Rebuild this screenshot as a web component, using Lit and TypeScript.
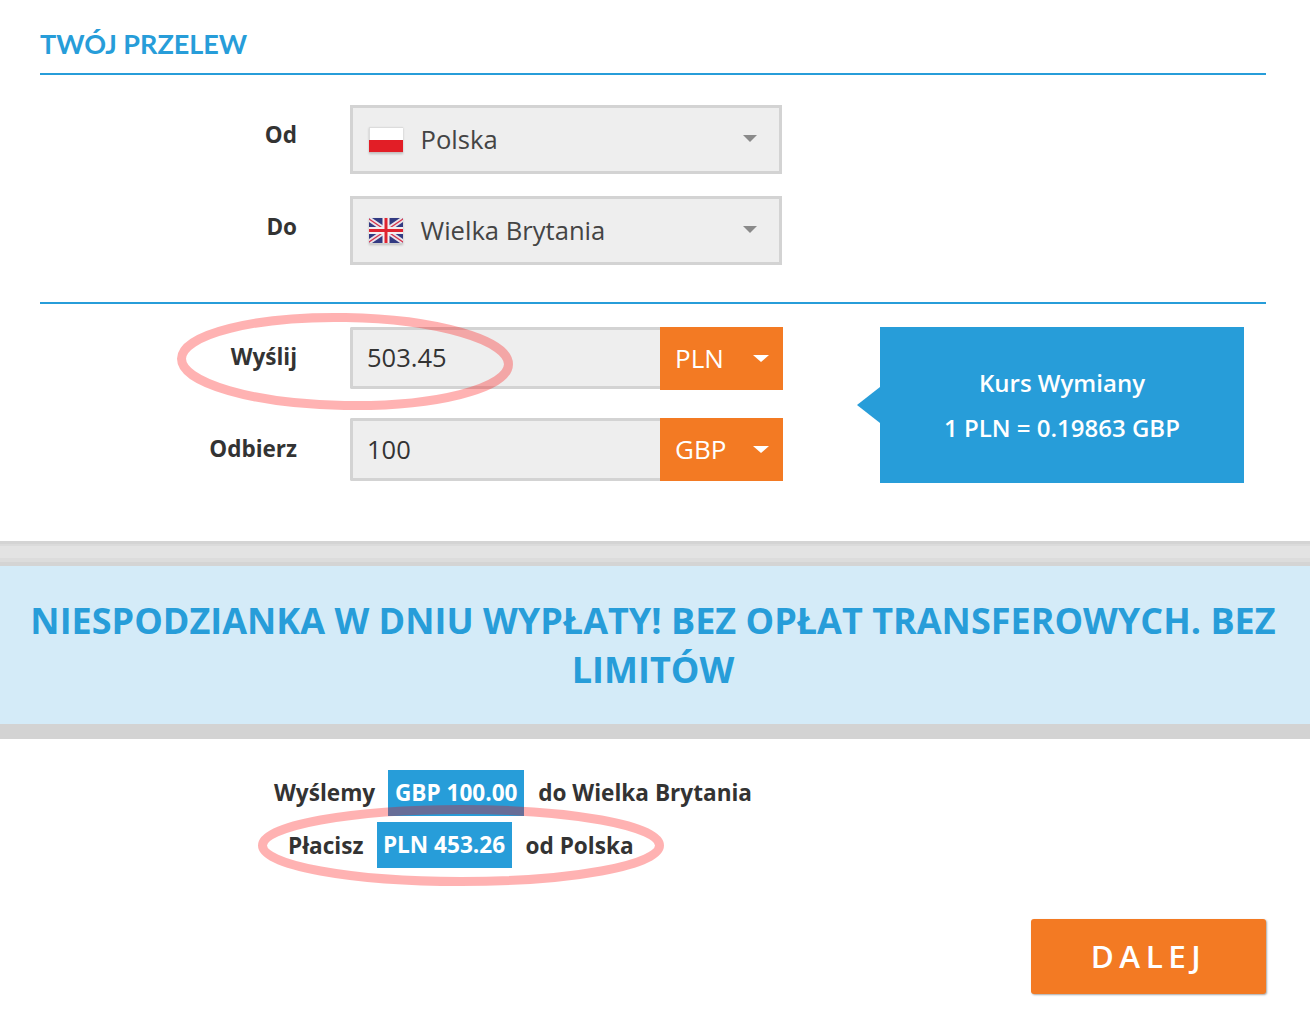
import { LitElement, html, css, svg } from "lit";
import { customElement } from "lit/decorators.js";

const plFlag = html`<svg class="flag" viewBox="0 0 34 26" width="34" height="26">
  <rect x="0" y="0" width="34" height="25" fill="#dcdcdc"/>
  <rect x="1" y="1" width="33" height="12" fill="#fff"/>
  <rect x="0" y="13" width="34" height="12" fill="#e21e26"/>
  <rect x="0" y="25" width="34" height="1" fill="#c9c0c0"/>
</svg>`;

const ukFlag = html`<svg class="flag" viewBox="0 0 34 26" width="34" height="26">
  <rect width="34" height="25" fill="#323a82"/>
  <path d="M0 1 L34 24 M34 1 L0 24" stroke="#e8e3ea" stroke-width="5"/>
  <path d="M0 1 L34 24 M34 1 L0 24" stroke="#d8324a" stroke-width="1.4"/>
  <path d="M17 0 V25 M0 12.5 H34" stroke="#f4eef0" stroke-width="7"/>
  <path d="M17 0 V25 M0 12.5 H34" stroke="#df2430" stroke-width="3"/>
  <rect y="25" width="34" height="1" fill="#cfcfcf"/>
</svg>`;

const rings = svg`
  <ellipse cx="345" cy="361.5" rx="163.5" ry="44" transform="rotate(1 345 361.5)" />
  <ellipse cx="461" cy="845.5" rx="198.5" ry="36" />
`;

@customElement("app-root")
export class AppRoot extends LitElement {
  static styles = css`
    :host {
      display: block;
      position: relative;
      width: 100%;
      min-height: 1027px;
      background: #fff;
      font-family: "Open Sans", "Noto Sans", sans-serif;
      color: #333;
      overflow: hidden;
    }
    .top {
      padding: 0 44px 58px 40px;
    }
    .title {
      margin: 0;
      height: 48px;
      padding-top: 25px;
      font-family: Lato, "Open Sans", sans-serif;
      font-size: 27px;
      line-height: 38px;
      font-weight: 700;
      letter-spacing: 0;
      color: #279dd9;
      border-bottom: 2px solid #279dd9;
    }
    .countries {
      display: grid;
      grid-template-columns: 257px 432px;
      column-gap: 53px;
      row-gap: 22px;
      padding: 30px 0 37px;
      border-bottom: 2px solid #279dd9;
    }
    .label {
      font-size: 22.5px;
      font-weight: 700;
      text-align: right;
      color: #333;
      line-height: 30px;
    }
    .countries .label { padding-top: 15px; }
    .countries .label.do { padding-top: 16px; }
    .select {
      height: 69px;
      box-sizing: border-box;
      border: 3px solid #d3d3d3;
      background: #eee;
      display: flex;
      align-items: center;
      padding: 0 22px 0 16px;
      font-size: 25.6px;
      color: #444;
    }
    .select .name { margin-left: 17.5px; flex: 1; }
    .flag {
      display: block;
      flex: none;
      margin-top: 1px;
      filter: blur(0.4px) drop-shadow(0 1px 1px rgba(0, 0, 0, 0.2));
    }
    .caret {
      width: 0;
      height: 0;
      border-left: 7px solid transparent;
      border-right: 7px solid transparent;
      border-top: 7px solid #8a8a8a;
      margin-top: -3px;
    }
    .exchange {
      display: flex;
      padding-top: 23px;
    }
    .fields {
      display: grid;
      grid-template-columns: 257px 433px;
      column-gap: 53px;
      row-gap: 28px;
      align-content: start;
    }
    .fields .label { line-height: 60px; }
    .fields .label.second { line-height: 62px; }
    .group { display: flex; height: 63px; }
    .input {
      flex: 1;
      height: 63px;
      box-sizing: border-box;
      border: 3px solid #d3d3d3;
      border-right: 0;
      border-radius: 2px 0 0 2px;
      background: #eee;
      padding: 0 0 2px 14px;
      display: flex;
      align-items: center;
      font-size: 25.5px;
      color: #333;
    }
    .input.short { height: 62px; padding-bottom: 3px; }
    .currency {
      width: 123px;
      box-sizing: border-box;
      background: #f37a23;
      color: #fff;
      font-size: 26px;
      display: flex;
      align-items: center;
      justify-content: space-between;
      padding: 0 14px 2px 15px;
    }
    .currency .caret { border-top-color: #fff; border-left-width: 8px; border-right-width: 8px; margin-top: 2px; }
    .rate {
      position: relative;
      margin-left: 97px;
      width: 364px;
      height: 156px;
      box-sizing: border-box;
      background: #279dd9;
      color: #fff;
      font-size: 24px;
      font-weight: 600;
      line-height: 45px;
      text-align: center;
      display: flex;
      flex-direction: column;
      justify-content: center;
    }
    .rate::before {
      content: "";
      position: absolute;
      left: -23px;
      top: 60px;
      border-top: 18px solid transparent;
      border-bottom: 18px solid transparent;
      border-right: 23px solid #279dd9;
    }
    .band {
      height: 25px;
      background: linear-gradient(
        #d4d4d4 0 3px,
        #dbdbdb 3px 5px,
        #e3e3e3 5px 17px,
        #dcdcdc 17px 21px,
        #d4d4d4 21px 25px
      );
    }
    .promo {
      margin: 0;
      box-sizing: border-box;
      height: 173px;
      padding: 30px 22px 0 18px;
      background: #d4ebf8;
      border-bottom: 15px solid #d3d3d3;
      color: #279dd9;
      font-size: 36px;
      font-weight: 700;
      line-height: 49px;
      text-align: center;
    }
    .summary {
      padding-top: 31px;
      font-size: 22.6px;
      font-weight: 700;
      display: flex;
      flex-direction: column;
      gap: 6px;
    }
    .line { display: flex; align-items: center; height: 46px; }
    .line.first { padding-left: 274px; }
    .line.second { padding-left: 288px; }
    .line.first span { position: relative; top: -1px; }
    .line span.amount {
      top: 0;
      background: #279dd9;
      color: #fff;
      height: 46px;
      box-sizing: border-box;
      display: flex;
      align-items: center;
      justify-content: center;
      padding-bottom: 2px;
      width: 136px;
      margin: 0 14px 0 13px;
    }
    .line.second span.amount { width: 135px; padding-bottom: 1px; }
    .actions {
      display: flex;
      justify-content: flex-end;
      padding: 51px 44px 0 0;
    }
    .next {
      width: 235px;
      height: 75px;
      box-sizing: border-box;
      padding-bottom: 2px;
      display: flex;
      align-items: center;
      justify-content: center;
      background: #f37a23;
      color: #fff;
      border-radius: 3px;
      box-shadow: 1px 1px 2px rgba(0,0,0,.35);
      font-size: 31.5px;
      font-weight: 600;
      letter-spacing: 5.5px;
    }
    .rings {
      position: absolute;
      left: 0;
      top: 0;
      width: 1310px;
      height: 1027px;
      pointer-events: none;
    }
    .rings ellipse {
      fill: none;
      stroke: rgba(255, 0, 0, 0.3);
      stroke-width: 9;
    }
  `;

  render() {
    return html`
      <section class="top">
        <h2 class="title">TWÓJ PRZELEW</h2>
        <div class="countries">
          <div class="label">Od</div>
          <div class="select">${plFlag}<span class="name">Polska</span><span class="caret"></span></div>
          <div class="label do">Do</div>
          <div class="select">${ukFlag}<span class="name">Wielka Brytania</span><span class="caret"></span></div>
        </div>
        <div class="exchange">
          <div class="fields">
            <div class="label">Wyślij</div>
            <div class="group"><div class="input short">503.45</div><div class="currency">PLN<span class="caret"></span></div></div>
            <div class="label second">Odbierz</div>
            <div class="group"><div class="input">100</div><div class="currency">GBP<span class="caret"></span></div></div>
          </div>
          <div class="rate"><div>Kurs Wymiany</div><div>1 PLN = 0.19863 GBP</div></div>
        </div>
      </section>
      <div class="band"></div>
      <h1 class="promo">NIESPODZIANKA W DNIU WYPŁATY! BEZ OPŁAT TRANSFEROWYCH. BEZ LIMITÓW</h1>
      <section class="summary">
        <div class="line first"><span>Wyślemy</span><span class="amount">GBP 100.00</span><span>do Wielka Brytania</span></div>
        <div class="line second"><span>Płacisz</span><span class="amount">PLN 453.26</span><span>od Polska</span></div>
      </section>
      <div class="actions"><div class="next">DALEJ</div></div>
      <svg class="rings" viewBox="0 0 1310 1027">${rings}</svg>
    `;
  }
}
